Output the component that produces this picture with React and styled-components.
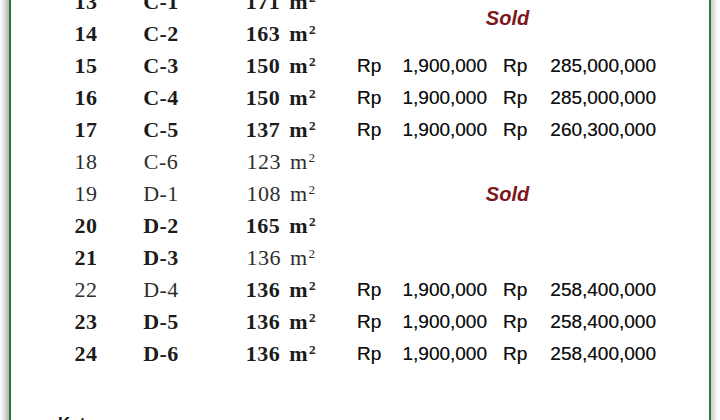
import React from 'react'
import styled, { createGlobalStyle } from 'styled-components'

const GlobalStyle = createGlobalStyle`
  html, body {
    margin: 0;
    padding: 0;
    background: #ffffff;
    overflow: hidden;
  }
`

const Page = styled.div`
  width: 720px;
  height: 420px;
  overflow: hidden;
  background: #fff;
`

const Sheet = styled.div`
  box-sizing: border-box;
  margin: -14px 0 0 9px;
  width: 702px;
  min-height: 520px;
  border-left: 2px solid #2b7a31;
  border-right: 2px solid #2b7a31;
  background: #fff;
  box-shadow: -5px 0 6px -1px rgba(0, 0, 0, 0.3), 4px 0 5px -1px rgba(0, 0, 0, 0.22);
`

const Grid = styled.div`
  display: grid;
  grid-template-columns: 80px 70px 161px 44px 86px 59px 110px;
  grid-auto-rows: 32px;
  align-items: center;
  padding-left: 35px;
`

const Serif = styled.div`
  font-family: "Liberation Serif", "DejaVu Serif", serif;
  font-size: 22px;
  font-weight: ${p => (p.$bold ? 700 : 400)};
  color: ${p => (p.$bold ? '#1c1c1c' : '#2e2e2e')};
  text-align: center;
  padding-left: ${p => (p.$shift ? '9px' : '0')};
  white-space: nowrap;
  letter-spacing: 0.5px;
  word-spacing: 3px;
`

const Sup = styled.sup`
  font-size: 0.6em;
  line-height: 0;
  vertical-align: 0.56em;
  margin-left: 1px;
`

const Money = styled.div`
  font-family: "Liberation Sans", Arial, sans-serif;
  font-size: 19px;
  color: #111;
  white-space: nowrap;
  text-align: ${p => (p.$right ? 'right' : 'left')};
  padding-left: ${p => (p.$indent ? '16px' : '0')};
  text-shadow: 0 0 0.4px rgba(0, 0, 0, 0.6);
`

const Blank = styled.div`
  grid-column: span 4;
`

const Sold = styled.div`
  grid-column: span 4;
  grid-row: span ${p => p.$rows};
  align-self: center;
  text-align: center;
  font-family: "Liberation Sans", Arial, sans-serif;
  font-style: italic;
  font-weight: 700;
  font-size: 20px;
  color: #7d1620;
  padding-left: 2px;
`

const Note = styled.div`
  margin: 44px 0 0 47px;
  font-family: "Liberation Sans", Arial, sans-serif;
  font-weight: 700;
  font-size: 17px;
  line-height: 20px;
  color: #111;
`

const rows = [
  { no: 13, blok: 'C-1', luas: 171, b: [1, 1, 1], sold: 2 },
  { no: 14, blok: 'C-2', luas: 163, b: [1, 1, 1] },
  { no: 15, blok: 'C-3', luas: 150, b: [1, 1, 1], total: '285,000,000' },
  { no: 16, blok: 'C-4', luas: 150, b: [1, 1, 1], total: '285,000,000' },
  { no: 17, blok: 'C-5', luas: 137, b: [1, 1, 1], total: '260,300,000' },
  { no: 18, blok: 'C-6', luas: 123, b: [0, 0, 0], sold: 3 },
  { no: 19, blok: 'D-1', luas: 108, b: [0, 0, 0] },
  { no: 20, blok: 'D-2', luas: 165, b: [1, 1, 1] },
  { no: 21, blok: 'D-3', luas: 136, b: [1, 1, 0], empty: true },
  { no: 22, blok: 'D-4', luas: 136, b: [0, 0, 1], total: '258,400,000' },
  { no: 23, blok: 'D-5', luas: 136, b: [1, 1, 1], total: '258,400,000' },
  { no: 24, blok: 'D-6', luas: 136, b: [1, 1, 1], total: '258,400,000' },
]

export default function App() {
  return (
    <Page>
      <GlobalStyle />
      <Sheet>
        <Grid>
          {rows.map(r => (
            <React.Fragment key={r.no}>
              <Serif $bold={r.b[0]}>{r.no}</Serif>
              <Serif $bold={r.b[1]}>{r.blok}</Serif>
              <Serif $bold={r.b[2]} $shift>
                {r.luas} m<Sup>2</Sup>
              </Serif>
              {r.sold && <Sold $rows={r.sold}>Sold</Sold>}
              {r.empty && <Blank />}
              {r.total && (
                <>
                  <Money>Rp</Money>
                  <Money $right>1,900,000</Money>
                  <Money $indent>Rp</Money>
                  <Money $right>{r.total}</Money>
                </>
              )}
            </React.Fragment>
          ))}
        </Grid>
        <Note>Keterangan :</Note>
      </Sheet>
    </Page>
  )
}
